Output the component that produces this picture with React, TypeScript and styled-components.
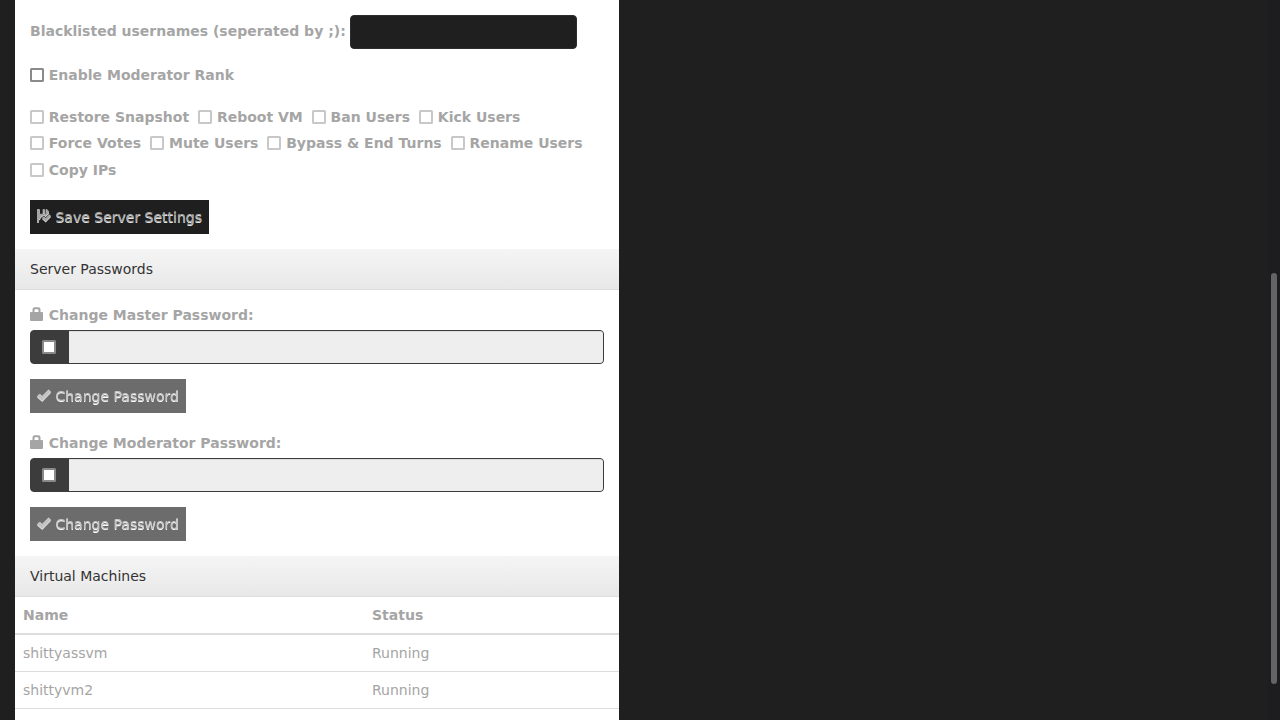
import styled, { createGlobalStyle } from 'styled-components';

const GlobalStyle = createGlobalStyle`
  * {
    box-sizing: border-box;
  }

  html, body {
    margin: 0;
    background: #1f1f1f;
    overflow: hidden;
  }

  body {
    font-family: "DejaVu Sans", Verdana, sans-serif;
    font-size: 14px;
    line-height: 20px;
    color: #a5a5a5;
  }
`

const Page = styled.div`
  display: flex;
  justify-content: space-between;
  height: 720px;
  padding-left: 15px;
  overflow: hidden;
  background: #1f1f1f;
`

const Panel = styled.div`
  width: 604px;
  height: 720px;
  background: #fff;
  overflow: hidden;
`

const ScrollTrack = styled.div`
  width: 12px;
  padding: 273px 3px 0;
  background: #1d1d1f;
`

const ScrollThumb = styled.div`
  height: 411px;
  border-radius: 3px;
  background: #646464;
`

const PanelBody = styled.div`
  padding: 15px;
`

const PanelHeading = styled.div`
  height: 41px;
  padding: 10px 15px;
  border-bottom: 1px solid #ddd;
  background-image: linear-gradient(#f5f5f5, #e8e8e8);
  color: #333;
`

const Field = styled.label`
  display: flex;
  height: 34px;
  gap: 4px;
  line-height: 32px;
  font-weight: bold;
`

const TextInput = styled.input`
  width: 227px;
  height: 34px;
  padding: 6px 12px;
  border: 1px solid #2c2c2c;
  border-radius: 4px;
  background: #1f1f1f;
  color: #a5a5a5;
`

const Checkbox = styled.input.attrs({ type: 'checkbox' })`
  appearance: none;
  width: 14px;
  height: 14px;
  margin: 0;
  border: 2px solid #8a8a8a;
  border-radius: 1.5px;
  background: #fff;

  &:disabled {
    border-color: #c8c8c8;
  }
`

const CheckLabel = styled.label`
  display: flex;
  align-items: center;
  gap: 4.8px;
  height: 26.5px;
  font-weight: bold;
`

const RankToggle = styled.div`
  margin-top: 13px;
`

const Permissions = styled.div`
  display: flex;
  flex-wrap: wrap;
  column-gap: 9px;
  margin: 15px 0 16.5px;
`

const Button = styled.button`
  display: flex;
  align-items: center;
  gap: 4.45px;
  height: 34px;
  padding: 0 7px;
  border: 0;
  background: #1f1f1f;
  color: #a5a5a5;
  font: 14px/20px "DejaVu Sans", Verdana, sans-serif;
  text-shadow: 0 1px 0 #e6e6e6;
  white-space: nowrap;

  svg {
    margin-bottom: 1px;
    filter: drop-shadow(0 1px 0 #ddd);
  }

  &:disabled {
    opacity: 0.65;
    text-shadow: 0 1px 0 #fff;
  }
`

const PasswordForm = styled.div`
  & + & {
    margin-top: 20px;
  }
`

const PasswordLabel = styled.label`
  display: flex;
  align-items: center;
  gap: 4.8px;
  height: 20px;
  margin-bottom: 5px;
  font-weight: bold;

  svg {
    margin-bottom: 2px;
  }
`

const InputGroup = styled.div`
  display: flex;
  height: 34px;
  margin-bottom: 15px;
  border: 1px solid #3c3c3c;
  border-radius: 4px;
  background: #3c3c3c;
  overflow: hidden;
`

const Addon = styled.span`
  display: flex;
  align-items: center;
  width: 38px;
  padding-left: 11px;
`

const GroupInput = styled.input`
  flex: 1;
  border: 0;
  background: #eee;
  box-shadow: inset 0 1px 1px rgba(0, 0, 0, 0.075);
`

const Table = styled.table`
  width: 100%;
  border-collapse: collapse;
  table-layout: fixed;

  th, td {
    height: 37px;
    padding: 8px;
    border-bottom: 1px solid #ddd;
    text-align: left;
    line-height: 20px;
  }

  th {
    border-bottom-width: 2px;
  }

  th:first-child {
    width: 349px;
  }
`

const LockIcon = () => (
  <svg width="14" height="14" viewBox="0 0 14 14">
    <path fill="currentColor" fillRule="evenodd" d="M0 6q0-1 1-1h1.5V2.6Q2.5.3 4.8.3h3.4q2.3 0 2.3 2.3V5H12q1 0 1 1v7q0 1-1 1H1q-1 0-1-1zM4.5 5h4V3q0-.8-.8-.8H5.3q-.8 0-.8.8z" />
  </svg>
)

const OkIcon = () => (
  <svg width="14" height="14" viewBox="0 0 14 14">
    <path fill="currentColor" d="M.4 7.8 2.3 5.9q.5-.5 1 0l1.9 1.9L11.1 1.7q.5-.5 1 0l1.5 1.5q.5.5 0 1L5.7 12.5q-.5.5-1 0L.4 8.7q-.4-.4 0-.9z" />
  </svg>
)

const FloppySavedIcon = () => (
  <svg width="14" height="14" viewBox="0 0 14 14">
    <path fill="currentColor" d="M0 0h2.8v4.8h6V0h.9L12 2.2v1.9L8.6 7.2 6.8 5.6 3.4 8.6v.8L2 10.5v2.3H0zM5.8 0h2v3.9h-2zM5 9l1.8-1.8 1.9 1.8 3.6-3.7L14 7l-5.3 5.5z" />
  </svg>
)

const permissions = [
  'Restore Snapshot',
  'Reboot VM',
  'Ban Users',
  'Kick Users',
  'Force Votes',
  'Mute Users',
  'Bypass & End Turns',
  'Rename Users',
  'Copy IPs',
]

const machines = [
  { name: 'shittyassvm', status: 'Running' },
  { name: 'shittyvm2', status: 'Running' },
]

function PasswordSection({ label }: { label: string }) {
  return (
    <PasswordForm>
      <PasswordLabel><LockIcon />{label}</PasswordLabel>
      <InputGroup>
        <Addon><Checkbox /></Addon>
        <GroupInput type="password" disabled />
      </InputGroup>
      <Button disabled><OkIcon />Change Password</Button>
    </PasswordForm>
  );
}

export default function App() {
  return (
    <>
      <GlobalStyle />
      <Page>
        <Panel>
          <PanelBody>
            <Field>Blacklisted usernames (seperated by ;):<TextInput type="text" /></Field>
            <RankToggle>
              <CheckLabel><Checkbox />Enable Moderator Rank</CheckLabel>
            </RankToggle>
            <Permissions>
              {permissions.map((name) => (
                <CheckLabel key={name}><Checkbox disabled />{name}</CheckLabel>
              ))}
            </Permissions>
            <Button><FloppySavedIcon />Save Server Settings</Button>
          </PanelBody>
          <PanelHeading>Server Passwords</PanelHeading>
          <PanelBody>
            <PasswordSection label="Change Master Password:" />
            <PasswordSection label="Change Moderator Password:" />
          </PanelBody>
          <PanelHeading>Virtual Machines</PanelHeading>
          <Table>
            <thead>
              <tr><th>Name</th><th>Status</th></tr>
            </thead>
            <tbody>
              {machines.map((vm) => (
                <tr key={vm.name}><td>{vm.name}</td><td>{vm.status}</td></tr>
              ))}
            </tbody>
          </Table>
        </Panel>
        <ScrollTrack><ScrollThumb /></ScrollTrack>
      </Page>
    </>
  );
}
